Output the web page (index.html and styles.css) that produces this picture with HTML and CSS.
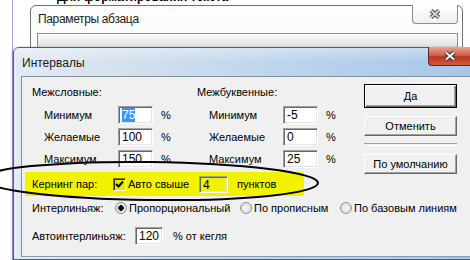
FILE: index.html
```html
<!DOCTYPE html>
<html>
<head>
  <meta charset="UTF-8">
  <title>Интервалы</title>
  <link rel="stylesheet" href="styles.css">
</head>
<body>
  <div class="doc">
    <div class="doc-line"><span>Для форматирования текста абзаца используйте команду</span></div>
  </div>

  <div class="win back">
    <div class="caption">
      <span class="title">Параметры абзаца</span>
      <span class="close">
        <svg width="12" height="10" viewBox="0 0 12 10"><path d="M2 1.5L10 8.5M10 1.5L2 8.5" stroke="#444" stroke-width="4"/><path d="M2 1.5L10 8.5M10 1.5L2 8.5" stroke="#d4d4d4" stroke-width="2"/></svg>
      </span>
    </div>
    <div class="client"></div>
  </div>

  <div class="win front">
    <div class="caption">
      <span class="title">Интервалы</span>
      <span class="close red">
        <svg width="12" height="10" viewBox="0 0 12 10"><path d="M2 1.5L10 8.5M10 1.5L2 8.5" stroke="#3a2a2a" stroke-width="4"/><path d="M2 1.5L10 8.5M10 1.5L2 8.5" stroke="#fff" stroke-width="2"/></svg>
      </span>
    </div>
    <div class="client">
      <div class="form">
        <div class="spacing">
          <div class="group">
            <div class="heading">Межсловные:</div>
            <div class="row"><span class="lbl">Минимум</span><span class="field"><span class="sel">75</span></span><span class="pct">%</span></div>
            <div class="row"><span class="lbl">Желаемые</span><span class="field">100</span><span class="pct">%</span></div>
            <div class="row"><span class="lbl">Максимум</span><span class="field">150</span><span class="pct">%</span></div>
          </div>
          <div class="group">
            <div class="heading">Межбуквенные:</div>
            <div class="row"><span class="lbl">Минимум</span><span class="field">-5</span><span class="pct">%</span></div>
            <div class="row"><span class="lbl">Желаемые</span><span class="field">0</span><span class="pct">%</span></div>
            <div class="row"><span class="lbl">Максимум</span><span class="field">25</span><span class="pct">%</span></div>
          </div>
        </div>

        <div class="buttons">
          <div class="btn default">Да</div>
          <div class="btn">Отменить</div>
          <div class="sep"></div>
          <div class="btn">По умолчанию</div>
        </div>

        <div class="kerning">
          <span class="klbl">Кернинг пар:</span>
          <span class="check">
            <svg width="9" height="9" viewBox="0 0 9 9"><path d="M1 4L3.5 6.5L8 1.5" stroke="#000" stroke-width="2" fill="none"/></svg>
          </span>
          <span class="auto-lbl">Авто свыше</span>
          <span class="field small">4</span>
          <span class="units">пунктов</span>
        </div>

        <div class="leading">
          <span class="llbl">Интерлиньяж:</span>
          <span class="opt o1"><span class="radio on"></span>Пропорциональный</span>
          <span class="opt o2"><span class="radio"></span>По прописным</span>
          <span class="opt"><span class="radio"></span>По базовым линиям</span>
        </div>

        <div class="autolead">
          <span class="alb">Автоинтерлиньяж:</span>
          <span class="field mid">120</span>
          <span class="units2">% от кегля</span>
        </div>
      </div>
    </div>
  </div>

  <svg class="mark" width="470" height="260" viewBox="0 0 470 260">
    <ellipse cx="150" cy="181" rx="168" ry="19" transform="rotate(0.7 150 181)" fill="none" stroke="#000" stroke-width="2"/>
  </svg>
</body>
</html>
```

FILE: styles.css
```css
body {
  margin: 0;
  width: 470px;
  height: 260px;
  overflow: hidden;
  position: relative;
  background: #fff;
  font-family: "Liberation Sans", Arial, sans-serif;
  font-size: 11px;
  color: #000;
}

/* document under the dialogs */
.doc {
  margin-left: 12px;
  height: 260px;
  border-left: 1px solid #a9a6e6;
}

.doc-line {
  height: 5px;
  overflow: hidden;
  padding-left: 44px;
}

.doc-line span {
  display: block;
  margin-top: -10px;
  font-weight: bold;
  font-size: 12px;
  line-height: 14px;
  white-space: nowrap;
  width: 173px;
  overflow: hidden;
}

/* windows */
.win {
  position: absolute;
  border-radius: 6px 6px 0 0;
}

.caption {
  display: flex;
  align-items: flex-start;
}

.title {
  font-size: 12px;
  line-height: 14px;
  white-space: nowrap;
}

.close {
  margin-left: auto;
  margin-top: -1px;
  display: flex;
  align-items: center;
  justify-content: center;
  box-sizing: border-box;
  border-radius: 0 0 4px 4px;
}

.back {
  left: 30px;
  top: 5px;
  width: 431px;
  height: 240px;
  border: 1px solid #707070;
  background: linear-gradient(#fdfdfd, #f3f3f3);
}

.back .caption {
  height: 27px;
}

.back .title {
  margin: 6px 0 0 7px;
  letter-spacing: -0.35px;
  color: #1a1a1a;
}

.back .close {
  width: 46px;
  height: 19px;
  margin-right: 4px;
  border: 1px solid #8c8c8c;
  border-top: none;
  background: linear-gradient(#ffffff, #f0f0f0);
}

.back .client {
  margin: 0 4px 0 6px;
  height: 200px;
  border: 1px solid #8f8f8f;
  background: linear-gradient(#fbfbfb, #dedede 14px, #efefef 30px);
}

.front {
  left: 13px;
  top: 47px;
  width: 456px;
  height: 211px;
  border: 1px solid #52606f;
  border-right: none;
  background: linear-gradient(90deg, #e3eaf2 0, #d2e0ee 120px, #b9d2ec 300px, #a8c7e8 456px);
  box-shadow: -1px 0 2px rgba(0, 0, 0, 0.25);
}

.front .caption {
  height: 28px;
  background: linear-gradient(rgba(255, 255, 255, 0.35), rgba(255, 255, 255, 0) 14px);
}

.front .title {
  margin: 8px 0 0 8px;
  color: #1c1c1c;
}

.front .close.red {
  width: 43px;
  height: 19px;
  margin-right: -1px;
  border: 1px solid #5a2a22;
  border-top: none;
  border-right: none;
  border-radius: 0 0 0 4px;
  background: linear-gradient(#e6a396 0, #d0654f 45%, #b8361f 55%, #cf5b3f 100%);
}

.front .client {
  margin-left: 7px;
  height: 179px;
  border-left: 1px solid #7f8fa2;
  border-top: 1px solid #7f8fa2;
  border-bottom: 1px solid #8a9ab0;
  background: #f0f0f0;
}

/* form */
.form {
  display: grid;
  grid-template-columns: 339px 93px;
  grid-template-rows: 95px 24px 24px auto;
  padding-left: 3px;
}

.spacing {
  grid-column: 1;
  grid-row: 1;
  display: flex;
  padding: 9px 0 0 7px;
}

.group {
  width: 165px;
}

.heading {
  line-height: 13px;
  margin-bottom: 7px;
}

.row {
  display: flex;
  align-items: center;
  height: 18px;
  margin-bottom: 4px;
}

.lbl {
  width: 74px;
  padding-left: 12px;
}

.field {
  box-sizing: border-box;
  width: 35px;
  height: 18px;
  padding: 2px 0 0 3px;
  font-size: 12px;
  line-height: 13px;
  background: #fff;
  border: 1px solid;
  border-color: #a0a0a0 #fff #fff #a0a0a0;
  box-shadow: inset 1px 1px 0 #696969, inset -1px -1px 0 #e3e3e3;
}

.sel {
  background: #3399ff;
  color: #fff;
}

.pct {
  margin-left: 8px;
}

.buttons {
  grid-column: 2;
  grid-row: 1 / 3;
  padding-top: 7px;
}

.btn {
  box-sizing: border-box;
  height: 20px;
  margin-bottom: 8px;
  display: flex;
  align-items: center;
  justify-content: center;
  background: #f0f0f0;
  border: 1px solid;
  border-color: #fff #696969 #696969 #fff;
  box-shadow: inset -1px -1px 0 #a0a0a0;
}

.btn.default {
  height: 24px;
  border: 1px solid #000;
  box-shadow: inset 1px 1px 0 #fff, inset -1px -1px 0 #696969, inset -2px -2px 0 #a0a0a0;
}

.sep {
  height: 1px;
  margin: -1px 0 8px;
  border-top: 1px solid #a0a0a0;
  border-bottom: 1px solid #fff;
}

.kerning {
  grid-column: 1;
  grid-row: 2;
  width: 279px;
  display: flex;
  align-items: center;
  padding-left: 7px;
  box-sizing: border-box;
  background: #f2f200;
}

.klbl {
  width: 81px;
}

.check {
  box-sizing: border-box;
  width: 13px;
  height: 13px;
  margin-right: 2px;
  display: flex;
  align-items: center;
  justify-content: center;
  background: #e8e800;
  border: 1px solid;
  border-color: #7a7a00 #fff #fff #7a7a00;
  box-shadow: inset 1px 1px 0 #303000;
}

.auto-lbl {
  width: 71px;
}

.field.small {
  width: 29px;
  height: 17px;
  background: #f2f200;
}

.units {
  margin-left: 9px;
}

.leading {
  grid-column: 1 / 3;
  grid-row: 3;
  display: flex;
  align-items: center;
  padding-left: 7px;
}

.llbl {
  width: 83px;
}

.opt {
  display: flex;
  align-items: center;
}

.opt.o1 {
  width: 125px;
}

.opt.o2 {
  width: 100px;
}

.radio {
  box-sizing: border-box;
  width: 12px;
  height: 12px;
  margin-right: 2px;
  border-radius: 50%;
  border: 1px solid #8e8f8f;
  background: radial-gradient(#f4f4f4, #d8d8d8);
}

.radio.on {
  background: radial-gradient(#000 0, #000 2.5px, #e4e4e4 3px);
}

.autolead {
  grid-column: 1 / 3;
  grid-row: 4;
  display: flex;
  align-items: center;
  margin-top: 7px;
  padding-left: 7px;
}

.alb {
  width: 103px;
}

.field.mid {
  width: 28px;
}

.units2 {
  margin-left: 10px;
}

/* annotation drawn over the screenshot */
.mark {
  position: absolute;
  left: 0;
  top: 0;
  pointer-events: none;
}
```
